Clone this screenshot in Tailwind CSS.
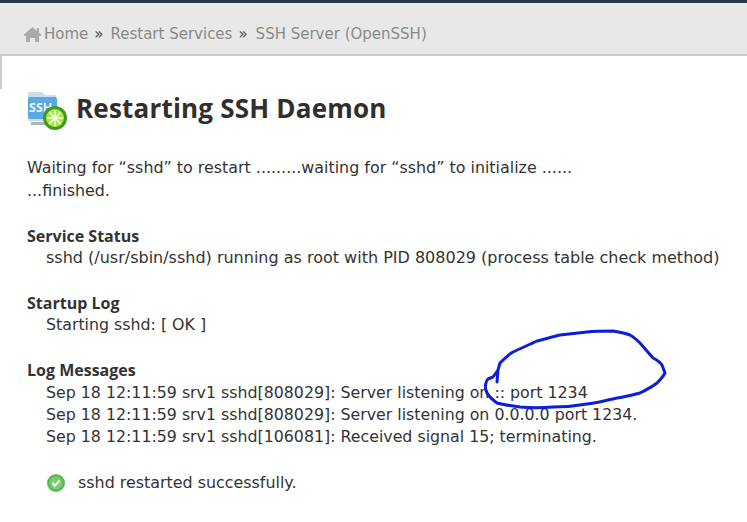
<!DOCTYPE html>
<html lang="en">
<head>
  <meta charset="UTF-8" />
  <title>Restarting SSH Daemon</title>
  <script src="https://cdn.jsdelivr.net/npm/@tailwindcss/browser@4"></script>
</head>
<body class="relative w-[747px] h-[522px] overflow-hidden bg-white text-[#333] font-['DejaVu_Sans',sans-serif] text-[15.9px]">
  <div class="h-[3px] bg-[#293a4a]"></div>
  <nav class="h-[53px] bg-[#e8e8e8] border-b-2 border-[#ccc] flex items-center pl-6 pt-[12px] text-[#888] text-[15px]">
    <svg class="w-[17px] h-[15px] mr-[3px]" viewBox="0 0 17 15" fill="#aaa"><path d="M8.500 0 13 4V1h2v5l2 1.500V9h-2v6h-4v-4H6v4H2V9H0V7.500z"/></svg>
    <span>Home</span>
    <span class="text-[#444] ml-[6px] mr-[7px]">»</span>
    <span class="mr-[6px]">Restart Services</span>
    <span class="text-[#444] mr-[8px]">»</span>
    <span>SSH Server (OpenSSH)</span>
  </nav>
  <div class="absolute left-0 top-[56px] h-[33px] w-[2px] bg-[#ccc]"></div>
  <main class="pl-[27px]">
    <div class="flex items-center mt-[32px] h-[44px]">
      <svg class="w-[41px] h-[42px] mr-[8px]" viewBox="0 0 41 42">
        <path d="M1 3h14l3 3h11v26H1z" fill="#cfdde8"/>
        <rect x="1" y="8" width="29" height="22" rx="2" fill="#5aa9e2"/>
        <rect x="4" y="33" width="22" height="3" fill="#a9b4bf"/>
        <text x="2" y="23" font-size="12.500" font-weight="700" fill="#e8f4ff" font-family="Open Sans">SSH</text>
        <circle cx="28" cy="29" r="12" fill="#3e9b22"/>
        <circle cx="28" cy="29" r="9" fill="#a9e84a"/>
        <path d="M28 21v16M20 29h16M22.300 23.300l11.400 11.400M33.700 23.300 22.300 34.700" stroke="#f2ffe0" stroke-width="1.500"/>
      </svg>
      <h1 class="font-['Open_Sans',sans-serif] text-[26px] tracking-[0.2px] font-bold text-[#2f2f2f] pb-[4px]">Restarting SSH Daemon</h1>
    </div>
    <p class="mt-[24px] leading-[23px]">Waiting for “sshd” to restart .........waiting for “sshd” to initialize ......<br />...finished.</p>
    <section class="mt-[23px] leading-[22px]">
      <h2 class="font-['Open_Sans',sans-serif] font-bold text-[16px]">Service Status</h2>
      <p class="pl-[19px] text-[16px]">sshd (/usr/sbin/sshd) running as root with PID 808029 (process table check method)</p>
    </section>
    <section class="mt-[23px] leading-[22px]">
      <h2 class="font-['Open_Sans',sans-serif] font-bold text-[16px]">Startup Log</h2>
      <p class="pl-[19px] text-[15.8px]">Starting sshd: [ OK ]</p>
    </section>
    <section class="mt-[23px] leading-[22px]">
      <h2 class="font-['Open_Sans',sans-serif] font-bold text-[16px] leading-[23px]">Log Messages</h2>
      <p class="pl-[19px] text-[15.8px]">Sep 18 12:11:59 srv1 sshd[808029]: Server listening on :: port 1234</p>
      <p class="pl-[19px] text-[15.8px]">Sep 18 12:11:59 srv1 sshd[808029]: Server listening on 0.0.0.0 port 1234.</p>
      <p class="pl-[19px] text-[15.8px]">Sep 18 12:11:59 srv1 sshd[106081]: Received signal 15; terminating.</p>
    </section>
    <div class="flex items-center mt-[24px] pl-[20px] leading-[22px]">
      <svg class="w-[18px] h-[18px] mr-[13px]" viewBox="0 0 18 18">
        <circle cx="9" cy="9" r="9" fill="#5cb85c"/>
        <circle cx="9" cy="9" r="6.500" fill="#7ccb6c"/>
        <path d="m5.500 9 2.500 2.700 4.500-5" fill="none" stroke="#fff" stroke-width="2"/>
      </svg>
      <span>sshd restarted successfully.</span>
    </div>
  </main>
  <svg class="absolute inset-0 pointer-events-none" width="747" height="522" viewBox="0 0 747 522">
    <path d="M497 382 498 370 500 363C505 358 508 355 513 352 521 348 529 345 537 341 545 339 552 337 560 335 569 334 578 333 587 332 596 331 605 331 613 331 619 332 625 333 630 335 634 337 637 340 640 343L653 358C657 360 660 362 662 365L665 373C663 377 660 380 657 383 652 387 646 390 640 393 632 395 625 397 617 398 607 400 597 403 587 404 576 406 564 407 553 407 542 408 531 408 520 407 512 406 504 405 497 403 493 400 489 397 487 393 485 389 485 386 486 383 486 381 487 380 488 379L493 377 498 370" fill="none" stroke="#0a1fd6" stroke-width="3" stroke-linecap="round" stroke-linejoin="round"/>
  </svg>
</body>
</html>
